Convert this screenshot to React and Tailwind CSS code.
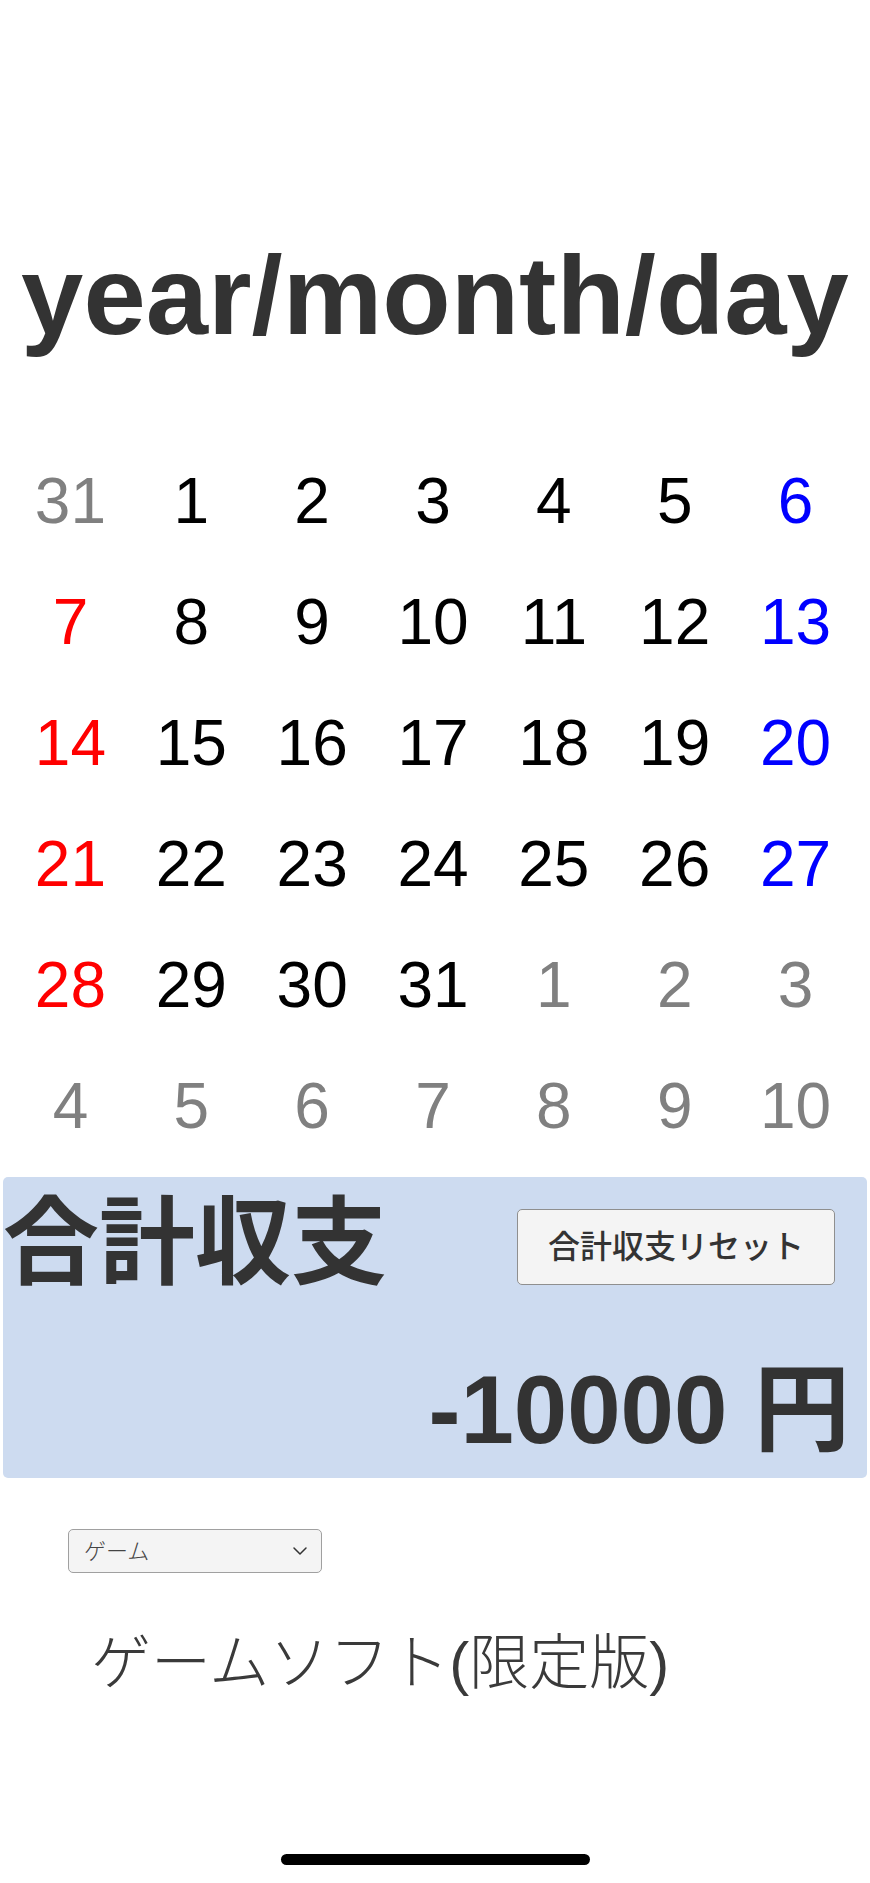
import { ChevronDown } from 'lucide-react'

const prevDays = [31]
const nextDays = [1, 2, 3, 4, 5, 6, 7, 8, 9, 10]

function buildDays() {
  const days = []
  prevDays.forEach(d => days.push({ d, muted: true }))
  for (let d = 1; d <= 31; d++) days.push({ d, muted: false })
  nextDays.forEach(d => days.push({ d, muted: true }))
  return days
}

function dayColor(day, i) {
  if (day.muted) return 'text-[#808080]'
  if (i % 7 === 0) return 'text-[#ff0000]'
  if (i % 7 === 6) return 'text-[#0000ff]'
  return 'text-black'
}

export default function App() {
  const days = buildDays()

  return (
    <div className="relative min-h-[1883px] bg-white font-['Liberation_Sans','Noto_Sans_CJK_JP',sans-serif] text-[#333]">
      <h1 className="pt-[240px] text-center text-[112px] font-bold leading-none">year/month/day</h1>

      <div className="mt-[89px] grid grid-cols-7 pl-[10px] pr-[14px]">
        {days.map((day, i) => (
          <div key={i} className={`aspect-square flex items-center justify-center text-[64px] leading-none ${dayColor(day, i)}`}>
            {day.d}
          </div>
        ))}
      </div>

      <div className="mx-[3px] mt-[11px] h-[301px] rounded-[5px] bg-[#cddbf0] flex flex-col">
        <div className="flex justify-between items-start">
          <h2 className="mt-[18px] text-[96px] font-bold leading-none">合計収支</h2>
          <button className="mt-8 mr-8 w-[318px] h-[76px] rounded-[5px] border border-[#8f8f8f] bg-[#f4f4f4] text-[32px] font-medium leading-none text-[#333]">
            合計収支リセット
          </button>
        </div>
        <div className="mt-auto mb-[20px] pr-[17px] text-right text-[96px] font-bold leading-none">-10000 円</div>
      </div>

      <div className="relative mt-[51px] ml-[68px] w-[254px] h-[44px]">
        <select className="w-full h-full appearance-none rounded-[5px] border border-[#a0a0a0] bg-[#f4f4f4] pl-[15px] text-[22px] font-light text-[#444]">
          <option>ゲーム</option>
        </select>
        <ChevronDown size={24} strokeWidth={1.5} className="pointer-events-none absolute right-[10px] top-[10px] text-[#333]" />
      </div>

      <p className="mt-[61px] ml-[91px] text-[60px] font-light leading-none text-[#3a3a3a]">ゲームソフト(限定版)</p>

      <div className="absolute bottom-[18px] left-[281px] w-[309px] h-[11px] rounded-full bg-black" />
    </div>
  )
}
